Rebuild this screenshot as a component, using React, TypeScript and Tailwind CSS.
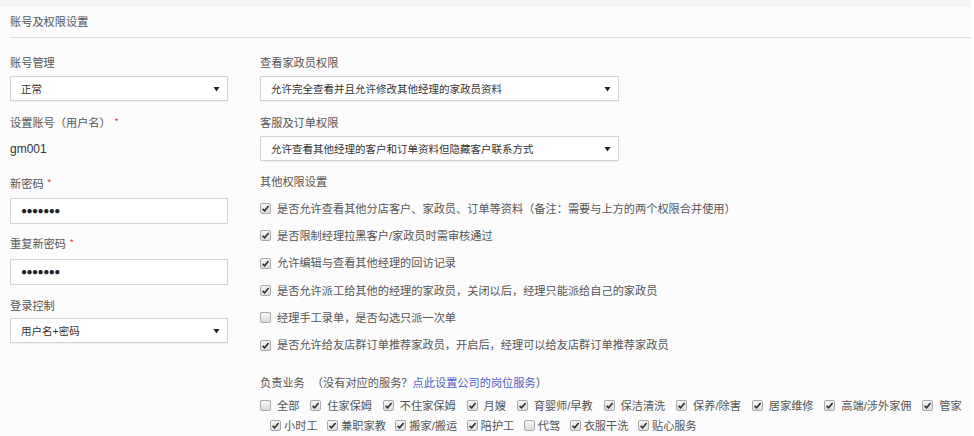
import React from 'react';

const font = { fontFamily: '"Liberation Sans", "Noto Sans CJK SC", sans-serif' };

function Check({ on }: { on: boolean }) {
  return (
    <span className="inline-flex h-[11px] w-[11px] shrink-0 items-center justify-center rounded-[2px] border border-[#a8a8a8] bg-gradient-to-b from-[#f7f7f7] to-[#dcdcdc]">
      {on && (
        <svg width="9" height="9" viewBox="0 0 9 9">
          <path d="M1.6 4.8 L3.6 6.8 L7.6 2" fill="none" stroke="#333" strokeWidth="1.7" />
        </svg>
      )}
    </span>
  );
}

function Arrow() {
  return (
    <svg width="7" height="6" viewBox="0 0 7 6" className="shrink-0">
      <path d="M0.5 1 L6.5 1 L3.5 5.5 Z" fill="#222" />
    </svg>
  );
}

function Select({ value, w }: { value: string; w: string }) {
  return (
    <div className={`flex h-[25px] ${w} items-center justify-between border border-[#d4d4d4] bg-white pl-[10px] pr-[7px] text-[10.5px] text-[#333] shadow-[0_1px_1px_rgba(0,0,0,0.04)]`}>
      <span>{value}</span>
      <Arrow />
    </div>
  );
}

function Pwd() {
  return (
    <div className="flex h-[26px] w-[218px] items-center border border-[#d4d4d4] bg-white pl-[10px] text-[10px] tracking-[-0.5px] text-[#222]">
      ●●●●●●●
    </div>
  );
}

function Star() {
  return <span className="relative -top-[3px] ml-[4px] text-[9px] text-[#e02020]">*</span>;
}

const perms: [boolean, string][] = [
  [true, '是否允许查看其他分店客户、家政员、订单等资料（备注：需要与上方的两个权限合并使用）'],
  [true, '是否限制经理拉黑客户/家政员时需审核通过'],
  [true, '允许编辑与查看其他经理的回访记录'],
  [true, '是否允许派工给其他的经理的家政员，关闭以后，经理只能派给自己的家政员'],
  [false, '经理手工录单，是否勾选只派一次单'],
  [true, '是否允许给友店群订单推荐家政员，开启后，经理可以给友店群订单推荐家政员'],
];

const row1: [boolean, string][] = [
  [false, '全部'],
  [true, '住家保姆'],
  [true, '不住家保姆'],
  [true, '月嫂'],
  [true, '育婴师/早教'],
  [true, '保洁清洗'],
  [true, '保养/除害'],
  [true, '居家维修'],
  [true, '高端/涉外家佣'],
  [true, '管家'],
];

const row2: [boolean, string][] = [
  [true, '小时工'],
  [true, '兼职家教'],
  [true, '搬家/搬运'],
  [true, '陪护工'],
  [false, '代驾'],
  [true, '衣服干洗'],
  [true, '贴心服务'],
];

export default function App() {
  return (
    <div className="h-[436px] w-full overflow-hidden bg-white" style={font}>
      <div className="h-full w-[971px] bg-[#f4f5f6] pt-[7px]">
        <div className="h-full bg-[#fcfcfc]">
          <div className="flex h-[30px] items-center pl-[10px] text-[11.2px] text-[#555]">账号及权限设置</div>
          <div className="ml-[10px] h-px bg-[#dedede]" />

          <div className="flex pt-[17px] text-[11.2px] leading-[16px] text-[#555]">
            {/* left column */}
            <div className="ml-[10px] flex w-[218px] flex-col">
              <div>账号管理</div>
              <div className="mt-[5px]">
                <Select value="正常" w="w-[218px]" />
              </div>
              <div className="mt-[14px]">
                设置账号（用户名）<Star />
              </div>
              <div className="mt-[9px] text-[12px] text-[#333]">gm001</div>
              <div className="mt-[19px]">
                新密码<Star />
              </div>
              <div className="mt-[5px]">
                <Pwd />
              </div>
              <div className="mt-[12px]">
                重复新密码<Star />
              </div>
              <div className="mt-[6px]">
                <Pwd />
              </div>
              <div className="mt-[13px]">登录控制</div>
              <div className="mt-[4px]">
                <Select value="用户名+密码" w="w-[218px]" />
              </div>
            </div>

            {/* right column */}
            <div className="ml-[32px] flex flex-1 flex-col">
              <div>查看家政员权限</div>
              <div className="mt-[5px]">
                <Select value="允许完全查看并且允许修改其他经理的家政员资料" w="w-[359px]" />
              </div>
              <div className="mt-[14px]">客服及订单权限</div>
              <div className="mt-[5px]">
                <Select value="允许查看其他经理的客户和订单资料但隐藏客户联系方式" w="w-[359px]" />
              </div>
              <div className="mt-[13px]">其他权限设置</div>
              <div className="mt-[5px] flex flex-col">
                {perms.map(([on, t], i) => (
                  <div key={i} className="flex h-[27.3px] items-center">
                    <Check on={on} />
                    <span className="ml-[6px]">{t}</span>
                  </div>
                ))}
              </div>
              <div className="mt-[16px]">
                负责业务 <span className="ml-[4px]">（没有对应的服务？</span>
                <span className="text-[#4b5fc9]">点此设置公司的岗位服务</span>）
              </div>
              <div className="mt-[5px] flex h-[20px] items-center whitespace-nowrap">
                {row1.map(([on, t], i) => (
                  <span key={i} className="mr-[10.8px] flex items-center">
                    <Check on={on} />
                    <span className="ml-[6px]">{t}</span>
                  </span>
                ))}
              </div>
              <div className="flex h-[20px] items-center whitespace-nowrap pl-[10px]">
                {row2.map(([on, t], i) => (
                  <span key={i} className="mr-[9.5px] flex items-center">
                    <Check on={on} />
                    <span className="ml-[3px]">{t}</span>
                  </span>
                ))}
              </div>
            </div>
          </div>
        </div>
      </div>
    </div>
  );
}
